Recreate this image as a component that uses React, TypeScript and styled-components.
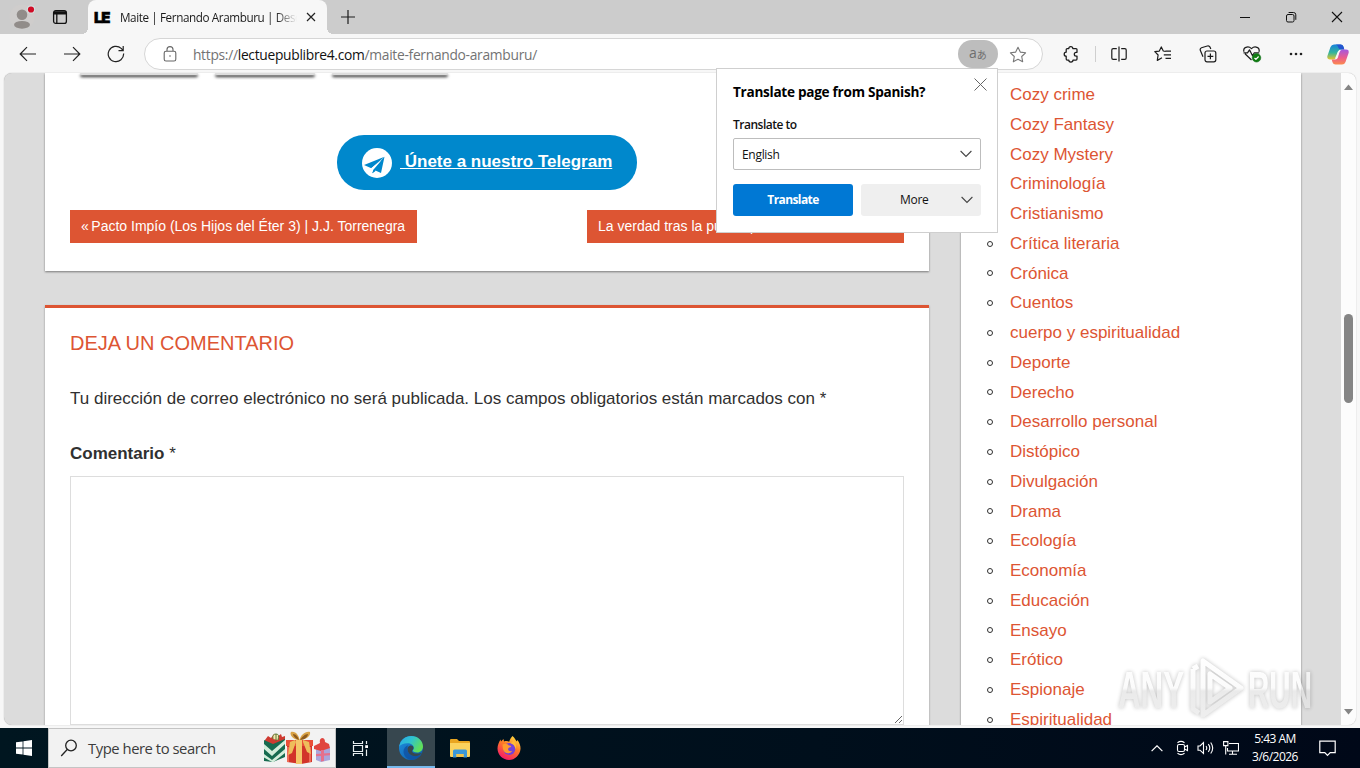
import styled, { createGlobalStyle } from "styled-components";

const categories = [
  "Cozy crime",
  "Cozy Fantasy",
  "Cozy Mystery",
  "Criminología",
  "Cristianismo",
  "Crítica literaria",
  "Crónica",
  "Cuentos",
  "cuerpo y espiritualidad",
  "Deporte",
  "Derecho",
  "Desarrollo personal",
  "Distópico",
  "Divulgación",
  "Drama",
  "Ecología",
  "Economía",
  "Educación",
  "Ensayo",
  "Erótico",
  "Espionaje",
  "Espiritualidad",
];

const App = () => {
  return (
    <Screen>
      <GlobalStyle />
      <TabStrip />
      <Toolbar />
      <Viewport>
        <Page>
          <MainColumn>
            <PostCard>
              <ShareRow>
                <ShareButton $width={118} />
                <ShareButton $width={100} />
                <ShareButton $width={116} />
              </ShareRow>
              <TelegramButton>
                <TelegramIcon />
                <TelegramLabel>&nbsp;Únete a nuestro Telegram</TelegramLabel>
              </TelegramButton>
              <PostNav>
                <PostLink $width={347}>
                  <Quote>«</Quote>Pacto Impío (Los Hijos del Éter 3) | J.J. Torrenegra
                </PostLink>
                <PostLink $width={317}>La verdad tras la puerta |</PostLink>
              </PostNav>
            </PostCard>
            <CommentCard>
              <CommentTitle>Deja un comentario</CommentTitle>
              <Note>
                Tu dirección de correo electrónico no será publicada. Los campos obligatorios están marcados con *
              </Note>
              <Label>
                <b>Comentario</b> *
              </Label>
              <CommentBox />
            </CommentCard>
          </MainColumn>
          <Sidebar>
            <CategoryList>
              {categories.map((name) => (
                <CategoryItem key={name}>
                  <CategoryLink>{name}</CategoryLink>
                </CategoryItem>
              ))}
            </CategoryList>
          </Sidebar>
        </Page>
        <ScrollBar>
          <svg width="9" height="6" viewBox="0 0 9 6"><path d="M0 6 4.5 .5 9 6z" fill="#858585" /></svg>
          <ScrollThumb />
          <svg width="9" height="6" viewBox="0 0 9 6"><path d="M0 0 4.5 5.5 9 0z" fill="#858585" /></svg>
        </ScrollBar>
      </Viewport>
      <Taskbar />
      <TranslatePopup />
      <Watermark />
    </Screen>
  );
};

export default App;

// Browser chrome

const TabStrip = () => (
  <TabBar>
    <Avatar width="28" height="28" viewBox="0 0 28 28">
      <circle cx="14" cy="14" r="12.5" fill="#cfcdcc" />
      <circle cx="14" cy="11.7" r="5.3" fill="#918c89" />
      <ellipse cx="14" cy="21.8" rx="8" ry="3.9" fill="#918c89" />
      <circle cx="23" cy="6.5" r="4" fill="#d7e3e3" />
      <circle cx="23" cy="6.5" r="3.1" fill="#d00b25" />
    </Avatar>
    <WorkspaceIcon width="16" height="16" viewBox="0 0 16 16" fill="none" stroke="#111" strokeWidth="1.3">
      <rect x="1.6" y="1.6" width="12.8" height="12.8" rx="2.2" />
      <path d="M2 3.2h12M2 4.6h12" strokeWidth="1.8" />
      <path d="M4.8 5v9" />
    </WorkspaceIcon>
    <Tab>
      <Favicon>LE</Favicon>
      <TabTitle>Maite | Fernando Aramburu | Desc</TabTitle>
      <svg width="10" height="10" viewBox="0 0 10 10" stroke="#222" strokeWidth="1.2"><path d="m1 1 8 8M9 1 1 9" /></svg>
    </Tab>
    <NewTab width="14" height="14" viewBox="0 0 14 14" stroke="#1c1c1c" strokeWidth="1.2">
      <path d="M7 0v14M0 7h14" />
    </NewTab>
    <WindowButtons>
      <svg width="12" height="12" viewBox="0 0 12 12" stroke="#111"><path d="M1 6.5h10" /></svg>
      <svg width="12" height="12" viewBox="0 0 12 12" fill="none" stroke="#111">
        <rect x="1.5" y="3.5" width="7.5" height="7.5" rx="1.5" />
        <path d="M3.6 1.5h4.9a2.3 2.3 0 0 1 2.3 2.3v5" />
      </svg>
      <svg width="12" height="12" viewBox="0 0 12 12" stroke="#111" strokeWidth="1.1"><path d="m1 1 10 10M11 1 1 11" /></svg>
    </WindowButtons>
  </TabBar>
);

const Toolbar = () => (
  <ToolRow>
    <ToolCell>
      <svg width="18" height="16" viewBox="0 0 18 16" fill="none" stroke="#222" strokeWidth="1.2"><path d="M17 8H1.5M8 1.2 1.2 8 8 14.8" /></svg>
    </ToolCell>
    <ToolCell>
      <svg width="18" height="16" viewBox="0 0 18 16" fill="none" stroke="#222" strokeWidth="1.2"><path d="M1 8h15.5M10 1.2 16.8 8 10 14.8" /></svg>
    </ToolCell>
    <ToolCell>
      <svg width="18" height="18" viewBox="0 0 18 18" fill="none" stroke="#222" strokeWidth="1.2">
        <path d="M16.6 8.5a7.7 7.7 0 1 1-2.4-5.1l1.6 1.7M16.2 1v4.6h-4.7" />
      </svg>
    </ToolCell>
    <AddressBar>
      <svg width="14" height="16" viewBox="0 0 14 16" fill="none" stroke="#666" strokeWidth="1.1">
        <rect x="1.2" y="5.2" width="11.6" height="9.8" rx="1.8" />
        <path d="M4 5V3.6a3 3 0 0 1 6 0V5" />
        <circle cx="7" cy="10" r=".8" fill="#666" stroke="none" />
      </svg>
      <Url>
        https://<b>lectuepublibre4.com</b>/maite-fernando-aramburu/
      </Url>
      <TranslateChip>
        <span>a</span>あ
      </TranslateChip>
      <svg width="18" height="17" viewBox="0 0 18 17" fill="none" stroke="#777" strokeWidth="1.1" strokeLinejoin="round">
        <path d="m9 1.2 2.3 4.9 5.3.7-3.9 3.7 1 5.3L9 13.2l-4.7 2.6 1-5.3L1.4 6.8l5.3-.7z" />
      </svg>
    </AddressBar>
    <ToolCell>
      <svg width="16" height="18" viewBox="0 0 16 18" fill="none" stroke="#1c1c1c" strokeWidth="1.25" strokeLinejoin="round">
        <path d="M5.8 3.600a2 2 0 0 1 4 0H13q1 0 1 1v2.700h-.8a1.900 1.900 0 0 0 0 3.800h.8v3q0 1-1 1h-3a2.100 2.100 0 0 1-4.200 0H4.200q-1 0-1-1v-2.900a2 2 0 0 1 0-4V4.600q0-1 1-1z" />
      </svg>
    </ToolCell>
    <Separator />
    <ToolCell>
      <svg width="16" height="16" viewBox="0 0 16 16" fill="none" stroke="#1c1c1c" strokeWidth="1.2">
        <path d="M5.8 2.600H2.200Q.8 2.600.8 4v8q0 1.400 1.400 1.400h3.600M10.200 2.600h3.600q1.400 0 1.400 1.400v8q0 1.400-1.400 1.400h-3.600M8 .5v15" />
      </svg>
    </ToolCell>
    <ToolCell>
      <svg width="18" height="16" viewBox="0 0 18 16" fill="none" stroke="#1c1c1c" strokeWidth="1.2" strokeLinejoin="round">
        <path d="M11.500 5.300 9.300 5 7.300.9l-2 4.200-4.500.6L4.100 9l-.8 5.400L8 11.800M11.500 5.200H17M9.800 8.800H17M11.500 12.400H17" />
      </svg>
    </ToolCell>
    <ToolCell>
      <svg width="18" height="18" viewBox="0 0 18 18" fill="none" stroke="#1c1c1c" strokeWidth="1.2">
        <rect x="6" y="6" width="10.8" height="10.8" rx="2" />
        <path d="M11.400 8.500v5.800M8.500 11.400h5.800M4 11.800 1.400 5.600q-.8-2 1.100-2.800L8.300 1q1.800-.6 2.700 1.100l.8 1.900" />
      </svg>
    </ToolCell>
    <ToolCell>
      <svg width="20" height="18" viewBox="0 0 20 18" fill="none" stroke="#1c1c1c" strokeWidth="1.2" strokeLinejoin="round">
        <path d="M9.500 15 3 8.800M2 6.800C.6 2.500 6 .3 9.500 3.600 13 .3 18.200 2.500 17 6.800M1.500 7.800h4l2-3 3 6 1.800-3h5" />
        <circle cx="14.5" cy="12.8" r="4.3" fill="#107c10" stroke="#0c6a1a" strokeWidth=".5" />
        <path d="m12.500 13 1.400 1.400 2.700-2.900" stroke="#fff" />
      </svg>
    </ToolCell>
    <ToolCell>
      <svg width="14" height="4" viewBox="0 0 14 4" fill="#222"><circle cx="2" cy="2" r="1.3" /><circle cx="7" cy="2" r="1.3" /><circle cx="12" cy="2" r="1.3" /></svg>
    </ToolCell>
    <CopilotCell>
      <svg width="22" height="21" viewBox="0 0 22 21">
        <defs>
          <linearGradient id="copA" x1="0" y1="0" x2="0" y2="1">
            <stop offset="0" stopColor="#1683dc" />
            <stop offset=".55" stopColor="#35b59b" />
            <stop offset="1" stopColor="#e8c52c" />
          </linearGradient>
          <linearGradient id="copB" x1="0" y1="0" x2="0" y2="1">
            <stop offset="0" stopColor="#a357e0" />
            <stop offset=".55" stopColor="#ec5c8d" />
            <stop offset="1" stopColor="#fb8a4c" />
          </linearGradient>
        </defs>
        <path d="M7 .5h6.500q2.200 0 3 2.200l.8 2.700h-3.600q-2 0-2.600 2L9.500 13q-.8 2.500-3.300 2.500H3Q-.3 15.500.4 12L3.500 3Q4.500.5 7 .5z" fill="url(#copA)" />
        <path d="M13.500.5q2.200 0 3 2.200l.8 2.700h-3.500Q12 5.400 11.300 3.500 10.500.5 8 .5z" fill="#2454cf" />
        <path d="M15 20.500H8.500q-2.200 0-3-2.200l-.8-2.700h3.600q2 0 2.600-2L12.500 8q.8-2.500 3.300-2.500H19q3.300 0 2.600 3.500L18.500 18q-1 2.500-3.500 2.500z" fill="url(#copB)" />
        <path d="m10.900 7.400 2-.6-3.100 7.200-2 1z" fill="#f7f7f7" />
      </svg>
    </CopilotCell>
  </ToolRow>
);

const TranslatePopup = () => (
  <Popup>
    <PopupHeader>
      <PopupTitle>Translate page from Spanish?</PopupTitle>
      <svg width="13" height="13" viewBox="0 0 13 13" stroke="#666"><path d="m.5.5 12 12M12.500.5l-12 12" /></svg>
    </PopupHeader>
    <PopupLabel>Translate to</PopupLabel>
    <Select>
      English
      <Chevron />
    </Select>
    <PopupActions>
      <PrimaryButton>Translate</PrimaryButton>
      <MoreButton>
        <span>More</span>
        <Chevron />
      </MoreButton>
    </PopupActions>
  </Popup>
);

const Chevron = () => (
  <svg width="12" height="8" viewBox="0 0 12 8" fill="none" stroke="#444" strokeWidth="1.1"><path d="m.6 1 5.400 5.400L11.400 1" /></svg>
);

const TelegramIcon = () => (
  <svg width="30" height="30" viewBox="0 0 30 30">
    <circle cx="15" cy="15" r="15" fill="#fff" />
    <path d="M2 17 22.500 8.700 9.300 20.200z" fill="#0088cc" />
    <path d="M22.500 8.700 19 25l-5.600-2.500-3.300 2.800.8-4.600z" fill="#0088cc" />
    <path d="M9.200 20.300 19.500 12.300 11.800 21.200 10 25.300z" fill="#fff" />
    <path d="m11.600 21.500 2.200 1.200-3.400 2.600z" fill="#0088cc" />
  </svg>
);

// Windows taskbar

const Taskbar = () => (
  <TaskRow>
    <TaskCell $width={48}>
      <svg width="16" height="16" viewBox="0 0 16 16" fill="#fff"><path d="M0 2.300 6.600 1.400v6.200H0zM7.400 1.300 16 0v7.600H7.400zM0 8.400h6.600v6.200L0 13.700zM7.400 8.400H16V16l-8.600-1.300z" /></svg>
    </TaskCell>
    <SearchBox>
      <svg width="18" height="18" viewBox="0 0 18 18" fill="none" stroke="#222" strokeWidth="1.3"><circle cx="11" cy="6.5" r="5.3" /><path d="m7.200 10.500-6 6.500" /></svg>
      <SearchText>Type here to search</SearchText>
      <Gifts />
    </SearchBox>
    <TaskCell $width={49}>
      <svg width="17" height="17" viewBox="0 0 17 17" fill="none" stroke="#e8eef0" strokeWidth="1.2">
        <path d="M1.500 1v2.500h9V1M1.500 16v-2.500h9V16M1.500 5.500h9v6h-9zM14.500 1v3M14.500 9.500V16" />
        <path d="M13.200 5.200h2.800v2.800h-2.800z" fill="#fff" stroke="none" />
      </svg>
    </TaskCell>
    <EdgeCell $width={48} $active>
      <svg width="24" height="24" viewBox="0 0 24 24">
        <defs>
          <linearGradient id="edgeTop" x1="0" y1="0" x2="1" y2=".5">
            <stop offset="0" stopColor="#2aa8e8" />
            <stop offset=".5" stopColor="#2fc3cf" />
            <stop offset="1" stopColor="#61df58" />
          </linearGradient>
          <linearGradient id="edgeBody" x1="0" y1="0" x2="1" y2="1">
            <stop offset="0" stopColor="#1f8fe0" />
            <stop offset="1" stopColor="#0c59a4" />
          </linearGradient>
        </defs>
        <circle cx="12" cy="12" r="12" fill="url(#edgeBody)" />
        <path d="M.2 10.500C1.500 4 6.500 0 12.200 0 19 0 24 5 24 10.500c0 3.700-2.600 6-5.700 6-3 0-4.700-1.200-4.500-2 .2-.6 1-1 1-2.500 0-3-3-4.800-6.300-4.800-4 0-7 1.500-8.300 3.300z" fill="url(#edgeTop)" />
        <path d="M8.500 13c0 5 5 7.800 9.500 7 2-.4 3.500-1.200 4.300-1.700C20 22 16.500 24 12.500 24 8 24 4.500 19.500 4.500 15.500c0-3 1.800-5 4.500-6.200A7 7 0 0 0 8.500 13z" fill="#0f4fa0" opacity=".75" />
        <path d="M8.500 13c0 5 5 7.800 9.500 7 2-.4 4.200-2 5-3.200-.2-.4-1.500.8-4.700.8-3.800 0-5.500-1.500-5.300-2.700.2-.8 1.500-1.400 1.500-3.200 0-1.600-2-2.500-3.600-2C9.400 10.200 8.500 11.500 8.500 13z" fill="#37474f" />
      </svg>
    </EdgeCell>
    <TaskCell $width={49}>
      <svg width="22" height="19" viewBox="0 0 22 19">
        <path d="M1 1q0-1 1-1h6l2 2h10q1 0 1 1v14H1z" fill="#e9a520" />
        <path d="M1 4h20v13q0 1-1 1H2q-1 0-1-1z" fill="#fbd25d" />
        <path d="M4 18.500V12q0-1.500 1.500-1.500h11Q18 10.500 18 12v6.500h-3.500V15h-7v3.500z" fill="#3c98d8" />
        <path d="M7.500 18v-3h7v3z" fill="#f2c24a" />
      </svg>
    </TaskCell>
    <TaskCell $width={49}>
      <svg width="24" height="24" viewBox="0 0 24 24">
        <defs>
          <linearGradient id="fox" x1=".8" y1="0" x2=".3" y2="1">
            <stop offset="0" stopColor="#ffe141" />
            <stop offset=".45" stopColor="#ff7a26" />
            <stop offset="1" stopColor="#f5156c" />
          </linearGradient>
        </defs>
        <path d="M15.500 0c2.500 2 3 4 4.200 5.500l.6-1.500c2.200 2.600 3.400 5.600 3.200 9C23 19 18 24 12 24S.5 19 .5 12.500C.5 9 2 6 3.500 3.500L4 5.500 6.500 3l.5 2.500c2-.8 4-.4 5.200.2C13 3.500 14 1.500 15.500 0z" fill="url(#fox)" />
        <circle cx="12.3" cy="13" r="6" fill="#7341d8" />
        <path d="M5.500 8.500c3-1.500 5.500-.5 6.300 1 2 0 2.700.8 2.200 1.500-1 .3-2.500.4-2.800 1.800-.5 1.800 1.500 3 4 2-2 4-8.200 3-9.200-1.500-.4-2-.3-3.500-.5-4.800z" fill="#ff9a2d" />
        <path d="M14 7.500c2.500.6 4.500 3 4.300 6 1.500-3 .5-6.500-1.500-8.500-1 .4-2 1.200-2.800 2.500z" fill="#ffbd35" />
      </svg>
    </TaskCell>
    <Tray>
      <svg width="12" height="7" viewBox="0 0 12 7" fill="none" stroke="#fff" strokeWidth="1.2"><path d="m.6 6.200 5.400-5.400 5.400 5.400" /></svg>
      <svg width="13" height="16" viewBox="0 0 13 16" fill="none" stroke="#fff" strokeWidth="1.1">
        <rect x="1.5" y="4.5" width="7" height="7" rx="1.5" />
        <path d="m8.500 7 3-1.500v5L8.500 9M1.500 2.700Q5 0 8.500 2.700M1.500 13.300q3.500 2.700 7 0" />
      </svg>
      <svg width="17" height="14" viewBox="0 0 17 14" fill="none" stroke="#fff" strokeWidth="1.1"><path d="M1 5v4.200h2l3.500 3.300V1.500L3 5zM9 5q1.500 2 0 4M11.300 3.200q3 3.800 0 7.600M13.700 1.500q4 5.500 0 11" /></svg>
      <svg width="16" height="14" viewBox="0 0 16 14" fill="none" stroke="#fff" strokeWidth="1.1"><path d="M6 2.500h9.500v7.500h-11V7M9.500 10v3M6 13.300h8M.6.600h4.300v4H.6zM2.700 4.600V13.400" /></svg>
      <Clock>
        <span>5:43 AM</span>
        <span>3/6/2026</span>
      </Clock>
      <svg width="17" height="17" viewBox="0 0 17 17" fill="none" stroke="#fff" strokeWidth="1.2"><path d="M.8 1.200h15.400v11.500h-5L8.500 15.500l-2.700-2.800h-5z" /></svg>
    </Tray>
  </TaskRow>
);

const Gifts = () => (
  <svg width="68" height="34" viewBox="0 0 68 34">
    <path d="M1 9 4 5l3 2 3-4 3 3 4-3 1 3 3-1v6l-1 3H1z" fill="#cf3a31" />
    <path d="M9 8q-1-5 3-5t2 6M12 3v7" fill="#f3e7b0" stroke="#5c7a35" strokeWidth="1" />
    <path d="m0 9 9 4 12-5v18L9 31l-9-1z" fill="#176b50" />
    <path d="m0 13 8 7L21 9v4L8 25l-8-7zM0 23l8 6 13-11v4L9 31.500l-9-5z" fill="#d3eedb" />
    <path d="M23 12h25v19l-11 2-14-2z" fill="#d2342a" />
    <path d="M22 9h27v6H22z" fill="#e94f39" />
    <path d="M24 16v15M46 16v15" stroke="#ef6a55" strokeWidth="2" />
    <path d="M32 9h6v24h-6z" fill="#f4c66a" />
    <path d="M35 9C29 9 25 3 27 1c5-1 8 4 8.500 8C37 4 41 0 46 1c1 4-4 8-11 8z" fill="#d9a347" />
    <path d="M35 9C32 8 29 5 29 3c3 0 5 3 6 6zm1 0c2-3 5-6 8-6 0 3-4 6-8 6z" fill="#8d5a1e" />
    <path d="m31 9-5 2-2 13 4-2 4-11zM39 9l6 2 2 12-4-2-4-10z" fill="#eebd5b" />
    <path d="M52 17h14v12l-9 2-5-2z" fill="#a9a6dc" />
    <path d="M50 15 56 12q-1-4 2-5 3 0 3 4l4 2 1 4-9 3-7-2z" fill="#e0463f" />
    <path d="M57 19h3v11l-3 .5zM52 23l14-1v2.200l-14 1z" fill="#e5708c" />
  </svg>
);

const Watermark = () => (
  <WatermarkSvg width="210" height="80" viewBox="0 0 210 80">
    <defs>
      <linearGradient id="fade" gradientUnits="userSpaceOnUse" x1="0" y1="10" x2="0" y2="70">
        <stop offset="0" stopColor="#fff" />
        <stop offset=".5" stopColor="#fafafa" />
        <stop offset=".55" stopColor="#e2e2e2" />
        <stop offset="1" stopColor="#e8e8e8" />
      </linearGradient>
    </defs>
    <text x="8" y="60" textLength="66" lengthAdjust="spacingAndGlyphs">ANY</text>
    <path d="M83 21v40l6 4M83 21l5-3" />
    <path d="M93 13v54l38-27z" />
    <path d="M100 26v28l20-14z" strokeWidth="2" />
    <text x="138" y="60" textLength="64" lengthAdjust="spacingAndGlyphs">RUN</text>
  </WatermarkSvg>
);

// Styled Components
const GlobalStyle = createGlobalStyle`
  *,
  *::before,
  *::after {
    box-sizing: border-box;
  }

  body {
    margin: 0;
    overflow: hidden;
    font-family: "Liberation Sans", Arial, sans-serif;
  }

  svg {
    display: block;
    flex-shrink: 0;
  }
`;

const Screen = styled.div`
  position: relative;
  display: flex;
  flex-direction: column;
  width: 1360px;
  height: 768px;
  background: #f7f7f7;
`;

const TabBar = styled.div`
  display: flex;
  align-items: center;
  height: 34px;
  background: #cccccc;
  font-family: "Open Sans", "Noto Sans", sans-serif;
`;

const Avatar = styled.svg`
  margin-left: 8px;
`;

const WorkspaceIcon = styled.svg`
  margin-left: 16px;
`;

const Tab = styled.div`
  position: relative;
  display: flex;
  align-items: center;
  align-self: stretch;
  width: 239px;
  margin-left: 20px;
  padding-left: 6px;
  background: #f7f7f7;
  border-radius: 8px 8px 0 0;

  &::before,
  &::after {
    content: "";
    position: absolute;
    bottom: 0;
    width: 6px;
    height: 6px;
  }

  &::before {
    left: -6px;
    background: radial-gradient(circle at 0 0, #cccccc 6px, #f7f7f7 6px);
  }

  &::after {
    right: -6px;
    background: radial-gradient(circle at 100% 0, #cccccc 6px, #f7f7f7 6px);
  }
`;

const Favicon = styled.span`
  width: 26px;
  color: #000;
  font-family: Inter, sans-serif;
  font-size: 15px;
  font-weight: 900;
  letter-spacing: -1.2px;
  -webkit-text-stroke: 0.5px #000;
`;

const TabTitle = styled.span`
  width: 177px;
  margin-right: 9px;
  overflow: hidden;
  white-space: nowrap;
  font-size: 11.7px;
  letter-spacing: -0.4px;
  color: #1a1a1a;
  mask-image: linear-gradient(to right, #000 88%, transparent);
`;

const NewTab = styled.svg`
  margin-left: 14px;
`;

const WindowButtons = styled.div`
  display: flex;
  gap: 34px;
  margin-left: auto;
  margin-right: 17px;
`;

const ToolRow = styled.div`
  display: flex;
  align-items: center;
  height: 39px;
  padding: 1px 0 0 6px;
  background: #f7f7f7;
  font-family: "Open Sans", "Noto Sans", sans-serif;
`;

const ToolCell = styled.div`
  display: flex;
  justify-content: center;
  flex-shrink: 0;
  width: 44.2px;
`;

const CopilotCell = styled(ToolCell)`
  width: 40px;
`;

const Separator = styled.div`
  width: 1px;
  height: 16px;
  margin: 0 1px 0 2px;
  background: #cfcfcf;
`;

const AddressBar = styled.div`
  display: flex;
  align-items: center;
  flex-shrink: 0;
  width: 899px;
  height: 32px;
  margin: 0 6px 0 5.4px;
  padding: 0 15px 0 18px;
  background: #fff;
  border: 1px solid #d6d6d6;
  border-radius: 16px;
`;

const Url = styled.span`
  margin-left: 16px;
  font-size: 13.8px;
  letter-spacing: -0.29px;
  color: #737373;

  b {
    font-weight: 400;
    color: #111;
  }
`;

const TranslateChip = styled.span`
  display: flex;
  align-items: center;
  justify-content: center;
  width: 40px;
  height: 28px;
  margin-left: auto;
  margin-right: 11px;
  border-radius: 14px;
  background: #bdbdbd;
  color: #6e6e6e;
  font-family: "Noto Sans CJK JP", sans-serif;
  font-size: 10px;

  span {
    font-family: "Open Sans", sans-serif;
    font-size: 14px;
    line-height: 14px;
    margin-top: -3px;
  }
`;

const Viewport = styled.div`
  display: flex;
  height: 652px;
  margin: 0 4px;
  overflow: hidden;
  background: #dcdcdc;
  border-radius: 8px;
  box-shadow: 0 0 1px #999;
`;

const Page = styled.div`
  display: flex;
  gap: 32px;
  width: 1337px;
  padding-left: 41px;
  color: #303030;
  font-size: 17px;
  line-height: 29.75px;
`;

const MainColumn = styled.div`
  display: flex;
  flex-direction: column;
  gap: 34px;
  width: 884px;
`;

const PostCard = styled.div`
  display: flex;
  flex-direction: column;
  height: 198px;
  flex-shrink: 0;
  padding: 0 25px;
  background: #fff;
  box-shadow: 0 1px 2px rgba(0, 0, 0, 0.45);
`;

const ShareRow = styled.div`
  display: flex;
  gap: 17px;
  padding-left: 10px;
`;

const ShareButton = styled.div<{ $width: number }>`
  width: ${(p) => p.$width}px;
  height: 2px;
  border-radius: 0 0 5px 5px;
  background: #ddd;
  box-shadow: 0 2px 3px #111;
`;

const TelegramButton = styled.div`
  display: flex;
  align-items: center;
  align-self: center;
  width: 300px;
  height: 55px;
  margin-top: 60px;
  padding-left: 25px;
  border-radius: 27px;
  background: #0088cc;
`;

const TelegramLabel = styled.span`
  margin: -2px 0 0 8px;
  color: #fff;
  font-weight: 700;
  text-decoration: underline;
`;

const PostNav = styled.div`
  display: flex;
  justify-content: space-between;
  margin-top: 20px;
`;

const PostLink = styled.div<{ $width: number }>`
  width: ${(p) => p.$width}px;
  height: 33px;
  padding-left: 11px;
  background: #dd5533;
  color: #fff;
  font-size: 14px;
  line-height: 33px;
  white-space: nowrap;
`;

const Quote = styled.span`
  margin-right: 2.5px;
`;

const CommentCard = styled.div`
  height: 460px;
  flex-shrink: 0;
  padding: 21px 25px 0;
  background: #fff;
  border-top: 3px solid #dd5533;
  box-shadow: 0 1px 2px rgba(0, 0, 0, 0.35);
`;

const CommentTitle = styled.h3`
  margin: 0;
  color: #dd5533;
  font-size: 20px;
  font-weight: 400;
  text-transform: uppercase;
`;

const Note = styled.p`
  margin: 25px 0 0;
  white-space: nowrap;
`;

const Label = styled.div`
  margin-top: 25px;
`;

const CommentBox = styled.textarea`
  display: block;
  width: 834px;
  height: 249px;
  margin-top: 8px;
  border: 1px solid #dddddd;
  background: #fff;
`;

const Sidebar = styled.div`
  width: 340px;
  height: 700px;
  background: #fff;
  box-shadow: 0 1px 2px rgba(0, 0, 0, 0.45);
`;

const CategoryList = styled.ul`
  margin: 7px 0 0;
  padding-left: 26px;
  list-style: none;
`;

const CategoryItem = styled.li`
  display: flex;
  align-items: center;
  gap: 17px;
  height: 29.75px;

  &::before {
    content: "";
    width: 6px;
    height: 6px;
    border: 1px solid #303030;
    border-radius: 50%;
  }
`;

const CategoryLink = styled.a`
  color: #dd5533;
`;

const ScrollBar = styled.div`
  display: flex;
  flex-direction: column;
  align-items: center;
  justify-content: space-between;
  width: 15px;
  padding: 11px 0 10px;
  background: #fcfcfc;
`;

const ScrollThumb = styled.div`
  width: 9px;
  height: 89px;
  margin-bottom: 82px;
  border-radius: 5px;
  background: #858585;
`;

const Popup = styled.div`
  position: absolute;
  left: 716px;
  top: 68px;
  width: 282px;
  height: 165px;
  padding: 9px 16px;
  background: #fff;
  border: 1px solid #cfcfcf;
  color: #111;
  font-family: "Open Sans", "Noto Sans", sans-serif;
  font-size: 12px;
`;

const PopupHeader = styled.div`
  display: flex;
  justify-content: space-between;
  margin-right: -6px;
`;

const PopupTitle = styled.div`
  margin-top: 4px;
  font-size: 13.6px;
  font-weight: 700;
  line-height: 20px;
  letter-spacing: -0.28px;
  color: #000;
`;

const PopupLabel = styled.div`
  margin: 14px 0 5px;
  font-weight: 600;
  line-height: 17px;
  letter-spacing: -0.5px;
`;

const Select = styled.div`
  display: flex;
  align-items: center;
  justify-content: space-between;
  height: 32px;
  padding: 0 8px;
  border: 1px solid #bdbdbd;
  border-radius: 2px;
  letter-spacing: -0.3px;
`;

const PopupActions = styled.div`
  display: flex;
  gap: 8px;
  margin-top: 14px;
`;

const PrimaryButton = styled.div`
  width: 120px;
  height: 32px;
  border-radius: 3px;
  background: #0078d4;
  color: #fff;
  font-weight: 700;
  line-height: 32px;
  text-align: center;
  letter-spacing: -0.6px;
`;

const MoreButton = styled.div`
  display: flex;
  align-items: center;
  justify-content: space-between;
  width: 120px;
  height: 32px;
  padding: 0 8px 1px 39px;
  border-radius: 3px;
  background: #efefef;
  letter-spacing: -0.3px;
`;

const TaskRow = styled.div`
  display: flex;
  height: 40px;
  margin-top: 3px;
  background: linear-gradient(to right, #001620, #000f1c 60%, #000818);
  font-family: "Open Sans", "Noto Sans", sans-serif;
`;

const TaskCell = styled.div<{ $width: number; $active?: boolean }>`
  display: flex;
  align-items: center;
  justify-content: center;
  width: ${(p) => p.$width}px;
  background: ${(p) => (p.$active ? "#37474f" : "transparent")};
  box-shadow: ${(p) => (p.$active ? "inset 0 -2px #76b9ed" : "none")};
`;

const EdgeCell = styled(TaskCell)`
  margin-left: 2px;
`;

const SearchBox = styled.div`
  display: flex;
  align-items: center;
  width: 288px;
  padding: 0 3px 0 11px;
  background: #f2f2f2;
  border: 1px solid #c4c4c4;
`;

const SearchText = styled.span`
  margin: 0 auto 0 10px;
  color: #3c3c3c;
  font-size: 14.8px;
  letter-spacing: -0.45px;
`;

const Tray = styled.div`
  display: flex;
  align-items: center;
  gap: 9px;
  margin-left: auto;
  margin-right: 24px;

  svg:nth-child(2) {
    margin: 0 -1px 0 4px;
  }
`;

const Clock = styled.div`
  display: flex;
  flex-direction: column;
  align-items: center;
  width: 48px;
  margin: 0 11px 0 3px;
  color: #fff;
  font-size: 12px;
  line-height: 18px;
  letter-spacing: -0.5px;
  white-space: nowrap;
`;

const WatermarkSvg = styled.svg`
  position: absolute;
  left: 1110px;
  top: 648px;
  overflow: visible;
  opacity: 0.7;
  filter: drop-shadow(0 0 2px rgba(0, 0, 0, 0.35));

  path {
    fill: none;
    stroke: url(#fade);
    stroke-width: 5px;
    stroke-linejoin: round;
  }

  text {
    fill: url(#fade);
    font-family: "Liberation Sans", Arial, sans-serif;
    font-size: 52px;
    font-weight: 700;
  }
`;
